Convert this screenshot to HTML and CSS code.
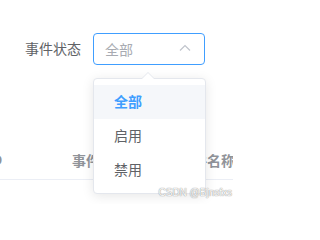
FILE: index.html
```html
<!DOCTYPE html>
<html lang="zh">
<head>
<meta charset="utf-8">
<link rel="stylesheet" href="styles.css">
</head>
<body>
<div class="page">
  <div class="form-row">
    <label class="form-label">事件状态</label>
    <div class="select">
      <span class="select-value">全部</span>
      <svg class="select-arrow" width="12" height="8" viewBox="0 0 12 8"><path d="M1 6.5 L6 1.5 L11 6.5" fill="none" stroke="#c0c4cc" stroke-width="1.2"/></svg>
    </div>
  </div>
  <div class="table-head">
    <div class="th th-id">ID</div>
    <div class="th th-type">事件类型</div>
    <div class="th th-name">事件名称</div>
  </div>
  <div class="dropdown">
    <div class="dropdown-arrow"></div>
    <ul class="dropdown-list">
      <li class="dropdown-item selected">全部</li>
      <li class="dropdown-item">启用</li>
      <li class="dropdown-item">禁用</li>
    </ul>
  </div>
  <div class="watermark">CSDN @Bjnsfxs</div>
</div>
</body>
</html>
```
FILE: styles.css
```css
html, body {
  margin: 0;
  padding: 0;
  background: #fff;
  font-family: "Liberation Sans", "Noto Sans CJK SC", sans-serif;
}
.page {
  position: relative;
  width: 233px;
  height: 204px;
  overflow: hidden;
  padding-top: 33px;
  box-sizing: border-box;
}
.form-row {
  display: flex;
  align-items: center;
  padding-left: 25px;
  height: 32px;
}
.form-label {
  font-size: 14px;
  color: #606266;
  margin-right: 12px;
  line-height: 32px;
}
.select {
  box-sizing: border-box;
  width: 112px;
  height: 32px;
  border: 1px solid #409eff;
  border-radius: 4px;
  display: flex;
  align-items: center;
  justify-content: space-between;
  padding: 0 13px 0 11px;
}
.select-value {
  font-size: 14px;
  color: #a8abb2;
}
.select-arrow {
  display: block;
  margin-top: -3px;
}
.table-head {
  display: flex;
  margin-top: 75px;
  height: 40px;
  align-items: center;
  border-bottom: 1px solid #ebeef5;
  box-sizing: border-box;
  white-space: nowrap;
}
.th {
  font-size: 14px;
  font-weight: bold;
  color: #909399;
  flex: none;
}
.th-id {
  margin-left: -12px;
  width: 84px;
}
.th-type {
  width: 107px;
}
.dropdown {
  position: absolute;
  left: 93px;
  top: 78px;
  width: 113px;
}
.dropdown-arrow {
  position: absolute;
  left: 49px;
  top: -6px;
  width: 0;
  height: 0;
  border-left: 6px solid transparent;
  border-right: 6px solid transparent;
  border-bottom: 6px solid #e4e7ed;
}
.dropdown-arrow::after {
  content: "";
  position: absolute;
  left: -6px;
  top: 1px;
  border-left: 6px solid transparent;
  border-right: 6px solid transparent;
  border-bottom: 6px solid #fff;
}
.dropdown-list {
  list-style: none;
  margin: 0;
  padding: 6px 0;
  box-sizing: border-box;
  background: #fff;
  border: 1px solid #e4e7ed;
  border-radius: 4px;
  box-shadow: 0 2px 12px rgba(0, 0, 0, 0.1);
}
.dropdown-item {
  height: 34px;
  line-height: 34px;
  padding: 0 20px;
  font-size: 14px;
  color: #606266;
}
.dropdown-item.selected {
  color: #409eff;
  font-weight: bold;
  background: #f5f7fa;
}
.watermark {
  position: absolute;
  right: 1px;
  top: 186px;
  font-size: 10px;
  line-height: 13px;
  color: rgba(255, 255, 255, 0.95);
  text-shadow: 0 0 1px #999, 0 0 1px #999;
}
```
